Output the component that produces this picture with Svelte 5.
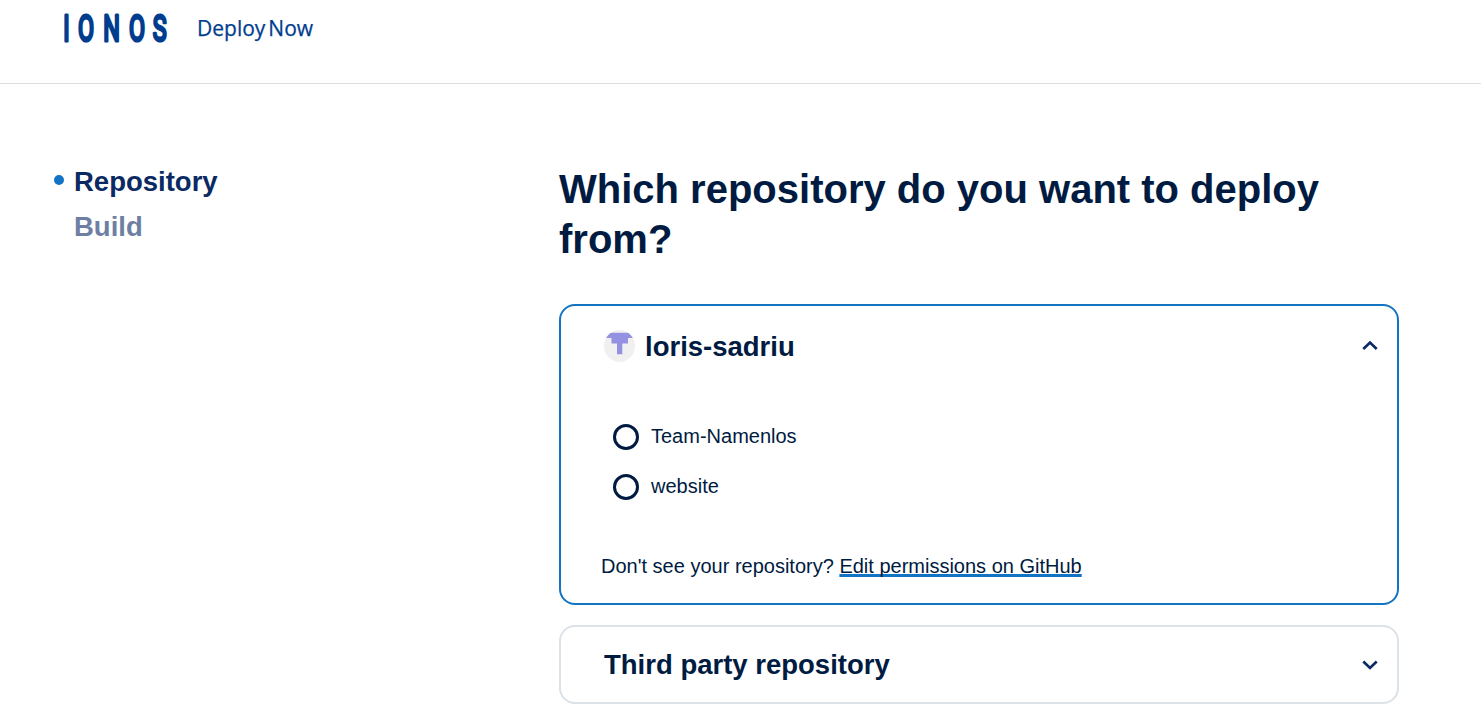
<script>
  let selected = $state(null);
  let open = $state(true);
  const repositories = ['Team-Namenlos', 'website'];
</script>

<header>
  <svg class="logo" viewBox="0 0 124 60" role="img" aria-label="IONOS">
    <g transform="scale(0.63 1)">
      <text y="33.3" x="8.5 39.7 80.2 120.6 156.5">IONOS</text>
    </g>
  </svg>
  <span class="product"><span>Deploy</span><span>Now</span></span>
</header>

<main>
  <nav>
    <div class="step active"><i></i><span>Repository</span></div>
    <div class="step"><i></i><span>Build</span></div>
  </nav>

  <section>
    <h1>Which repository do you want to deploy from?</h1>

    <div class="card current">
      <button class="head" onclick={() => (open = !open)}>
        <svg class="avatar" viewBox="0 0 31 32">
          <defs><clipPath id="round"><ellipse cx="15.5" cy="16" rx="15.5" ry="16" /></clipPath></defs>
          <g clip-path="url(#round)">
            <rect width="31" height="32" fill="#f0f0f0" />
            <path d="M0 2.7H31V8H24V13.5H18.3V24.3H13V13.5H7.5V8H0Z" fill="#9490e2" />
          </g>
        </svg>
        <h2>loris-sadriu</h2>
        <svg class="chevron" viewBox="0 0 18 12"><path d="M2.3 9 9 2.6 15.7 9" /></svg>
      </button>
      {#if open}
        <div class="options">
          {#each repositories as name}
            <label>
              <input type="radio" name="repository" value={name} bind:group={selected} />
              <span>{name}</span>
            </label>
          {/each}
        </div>
        <p>Don't see your repository? <a href="#permissions">Edit permissions on GitHub</a></p>
      {/if}
    </div>

    <div class="card other">
      <button class="head">
        <h2>Third party repository</h2>
        <svg class="chevron" viewBox="0 0 18 12"><path d="M2.3 2.6 9 9 15.7 2.6" /></svg>
      </button>
    </div>
  </section>
</main>

<style>
  :global(body) {
    overflow: hidden;
    background: #fff;
    font-family: Arial, 'Liberation Sans', sans-serif;
    color: #001b41;
  }
  header {
    box-sizing: border-box;
    height: 84px;
    padding: 8px 0 0 61px;
    display: flex;
    align-items: flex-start;
    border-bottom: 1px solid #dcdee0;
    color: #003d8f;
  }
  .logo {
    width: 124px;
    height: 60px;
    flex: none;
  }
  .logo text {
    font: 400 37px Roboto, sans-serif;
    text-anchor: middle;
    fill: #003d8f;
    stroke: #003d8f;
    stroke-width: 3.2;
    stroke-linejoin: round;
  }
  .product {
    display: flex;
    gap: 3px;
    margin: 5px 0 0 12px;
    font: 400 21px/30px 'Open Sans', sans-serif;
    -webkit-text-stroke: 0.25px #003d8f;
  }
  main {
    display: flex;
  }
  nav {
    box-sizing: border-box;
    width: 559px;
    flex: none;
    padding: 75px 0 0 54px;
  }
  .step {
    display: flex;
    align-items: center;
    gap: 10px;
    height: 45px;
    font-size: 27.5px;
    line-height: 45px;
    font-weight: 700;
    color: #6e7fa3;
  }
  .step i {
    width: 10px;
    height: 10px;
    margin-top: -3px;
    border-radius: 50%;
  }
  .active {
    color: #0b2a63;
  }
  .active i {
    background: #1474c4;
  }
  section {
    width: 840px;
    padding-top: 80px;
  }
  h1 {
    margin: 0 0 40px;
    font-size: 40px;
    line-height: 50px;
  }
  .card {
    box-sizing: border-box;
    border: 2px solid #dbe2e8;
    border-radius: 16px;
  }
  .current {
    height: 301px;
    border-color: #1474c4;
  }
  .other {
    height: 79px;
    margin-top: 20px;
  }
  .head {
    width: 100%;
    height: 75px;
    padding: 0 18px 0 43px;
    display: flex;
    align-items: center;
    border: 0;
    background: none;
    font: inherit;
    color: inherit;
    text-align: left;
  }
  .current .head {
    height: 80px;
  }
  h2 {
    flex: 1;
    margin: 0;
    font-size: 27.5px;
    line-height: 36px;
  }
  .current h2 {
    padding-top: 2px;
  }
  .avatar {
    width: 31px;
    height: 32px;
    margin-right: 10px;
  }
  .chevron {
    width: 18px;
    height: 12px;
    fill: none;
    stroke: #0b2a63;
    stroke-width: 2.7;
  }
  .options {
    padding: 26px 0 0 52px;
  }
  label {
    display: flex;
    align-items: center;
    gap: 12px;
    height: 50px;
    font-size: 20px;
  }
  label span {
    padding-bottom: 2px;
  }
  input {
    appearance: none;
    box-sizing: border-box;
    width: 26px;
    height: 26px;
    margin: 0;
    border: 3px solid #001b41;
    border-radius: 50%;
  }
  input:checked {
    background: radial-gradient(#001b41 45%, transparent 50%);
  }
  p {
    margin: 39px 0 0 40px;
    font-size: 20px;
    line-height: 30px;
  }
  a {
    color: inherit;
    text-decoration: underline 3px #1474c4;
    text-decoration-skip-ink: none;
    text-underline-offset: 1px;
  }
</style>
